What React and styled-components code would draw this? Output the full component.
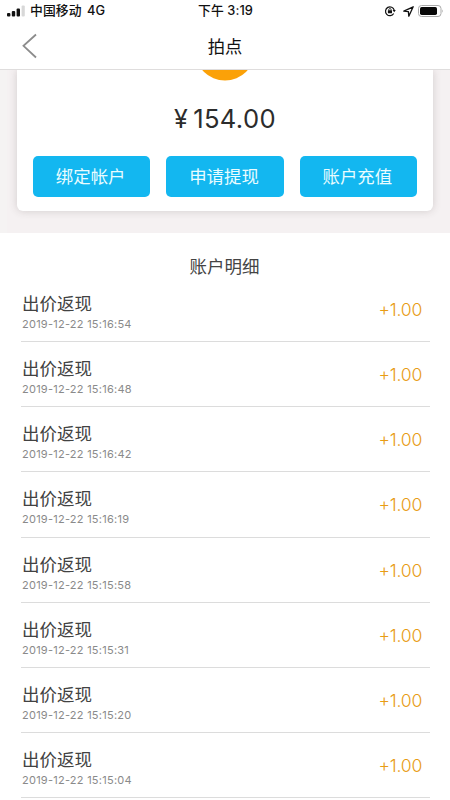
import React from 'react';
import styled, { createGlobalStyle } from 'styled-components';

const GlobalStyle = createGlobalStyle`
  * { box-sizing: border-box; }
  body {
    margin: 0;
    background: #fff;
    font-family: Inter, "Noto Sans CJK SC", sans-serif;
    overflow: hidden;
  }
`;

const Screen = styled.div`
  width: 450px;
  height: 800px;
  overflow: hidden;
  background: #fff;
  display: flex;
  flex-direction: column;
`;

const StatusBar = styled.div`
  flex: none;
  height: 22px;
  display: grid;
  grid-template-columns: 1fr auto 1fr;
  align-items: center;
  padding: 0 6px 0 7px;
  color: #111;
  font-size: 12.8px;
  font-weight: 500;
  line-height: 22px;
  letter-spacing: 0.08px;
  white-space: nowrap;
`;

const Carrier = styled.div`
  display: flex;
  align-items: center;
  gap: 5px;
`;

const Network = styled.span`
  margin-left: 2px;
`;

const StatusIcons = styled.div`
  display: flex;
  justify-content: flex-end;
  align-items: center;
`;

const NavBar = styled.header`
  flex: none;
  height: 48px;
  display: grid;
  grid-template-columns: 40px 1fr 40px;
  align-items: center;
  border-bottom: 1px solid #dfdddd;
`;

const BackButton = styled.button`
  border: 0;
  padding: 0 0 0 21px;
  background: none;
  display: flex;
`;

const NavTitle = styled.h1`
  margin: 0;
  padding-top: 2px;
  font-size: 17.3px;
  font-weight: 400;
  line-height: 24px;
  text-align: center;
  color: #111;
`;

const Wallet = styled.section`
  flex: none;
  height: 163px;
  padding: 0 17px 22px;
  overflow: hidden;
  background: linear-gradient(90deg, #f5f3f3 0 7px, #f5f1f2 7px);
`;

const Card = styled.div`
  height: 141px;
  padding: 0 16px;
  background: #fff;
  border-radius: 0 0 6px 6px;
  box-shadow: 0 0 9px rgba(70, 55, 55, 0.2);
  display: flex;
  flex-direction: column;
  align-items: center;
`;

const Coin = styled.svg`
  display: block;
  flex: none;
`;

const Balance = styled.div`
  margin-top: 21px;
  height: 34px;
  display: flex;
  align-items: center;
  gap: 5px;
  font-size: 25.6px;
  line-height: 34px;
  font-weight: 400;
  letter-spacing: 0.35px;
  color: #2c2c2c;
`;

const Currency = styled.span`
  font-size: 25px;
`;

const Actions = styled.div`
  width: 100%;
  margin-top: 20px;
  display: grid;
  grid-template-columns: repeat(3, 117.3px);
  justify-content: space-between;
`;

const ActionButton = styled.button`
  height: 41px;
  border: 0;
  border-radius: 5px;
  padding: 0 2px 0 0;
  background: #13b7f0;
  color: #e9fcff;
  font-family: inherit;
  font-size: 17.4px;
  line-height: 41px;
`;

const Details = styled.section`
  flex: 1;
  min-height: 0;
  padding: 20px 20px 0 21px;
`;

const DetailsTitle = styled.h2`
  margin: 0;
  padding-right: 2px;
  height: 24px;
  font-size: 17.5px;
  line-height: 28px;
  font-weight: 400;
  text-align: center;
  color: #444;
`;

const List = styled.ul`
  margin: 0;
  padding: 0;
  list-style: none;
`;

const Row = styled.li`
  height: 65.15px;
  padding: 12px 8px 0 1px;
  border-bottom: 1px solid #dcdcdc;
  display: flex;
  justify-content: space-between;
`;

const RowTitle = styled.div`
  height: 28px;
  font-size: 17.5px;
  line-height: 29px;
  color: #424242;
`;

const RowTime = styled.time`
  display: block;
  font-size: 11px;
  line-height: 15px;
  letter-spacing: 0.25px;
  color: #8a8a8a;
`;

const RowAmount = styled.div`
  font-size: 17.6px;
  line-height: 42px;
  font-weight: 300;
  letter-spacing: -0.25px;
  color: #e89c14;
`;

const ACTIONS = ['绑定帐户', '申请提现', '账户充值'];

const TIMES = [
  '15:16:54', '15:16:48', '15:16:42', '15:16:19',
  '15:15:58', '15:15:31', '15:15:20', '15:15:04',
];

const SignalIcon = () => (
  <svg width="18" height="12" viewBox="0 0 18 12">
    <rect x="0" y="8" width="3.4" height="3.5" rx="1" fill="#111" />
    <rect x="4.8" y="6" width="3.4" height="5.5" rx="1" fill="#111" />
    <rect x="9.6" y="3.5" width="3.4" height="8" rx="1" fill="#111" />
    <rect x="14.6" y="0.5" width="3.2" height="11" rx="1" fill="#d8d8d8" />
  </svg>
);

const RotationLockIcon = () => (
  <svg width="12" height="12" viewBox="0 0 12 12" fill="none" stroke="#111">
    <path d="M9.7 8.5A4.4 4.4 0 1 1 10.2 5.2" strokeWidth="1.2" />
    <path d="M8.6 5.1h3.2l-1.6 2.1z" fill="#111" stroke="none" />
    <rect x="3.9" y="5.3" width="4.1" height="3" rx="0.5" fill="#111" stroke="none" />
    <path d="M4.7 5.5v-.7a1.25 1.25 0 0 1 2.5 0v.7" strokeWidth="0.8" />
  </svg>
);

const LocationIcon = styled.svg`
  margin: 0 4px 0 7px;
`;

const App = () => (
  <>
    <GlobalStyle />
    <Screen>
      <StatusBar>
        <Carrier>
          <SignalIcon />
          <span>中国移动 <Network>4G</Network></span>
        </Carrier>
        <span>下午 3:19</span>
        <StatusIcons>
          <RotationLockIcon />
          <LocationIcon width="11" height="11" viewBox="0 0 11 11">
            <path d="M0.8 5.2 10.2 0.8 5.8 10.2 5.4 5.6z" fill="none" stroke="#111" strokeWidth="1.3" strokeLinejoin="round" />
          </LocationIcon>
          <svg width="26" height="12" viewBox="0 0 26 12">
            <rect x="0.5" y="0.5" width="22.5" height="11" rx="3" fill="none" stroke="#aaa" />
            <rect x="2" y="2" width="17" height="8" rx="1.7" fill="#080808" />
            <path d="M24.3 4.2q1.4 1.8 0 3.6z" fill="#999" />
          </svg>
        </StatusIcons>
      </StatusBar>
      <NavBar>
        <BackButton aria-label="返回">
          <svg width="17" height="26" viewBox="0 0 17 26">
            <path d="M15 1.5 2.5 12.8 15 24.5" fill="none" stroke="#8c8c8c" strokeWidth="1.8" />
          </svg>
        </BackButton>
        <NavTitle>拍点</NavTitle>
      </NavBar>
      <Wallet>
        <Card>
          <Coin width="60" height="11" viewBox="0 0 60 11">
            <circle cx="30" cy="-19.5" r="30" fill="#fba108" />
          </Coin>
          <Balance>
            <Currency>¥</Currency>
            <span>154.00</span>
          </Balance>
          <Actions>
            {ACTIONS.map((label) => (
              <ActionButton key={label}>{label}</ActionButton>
            ))}
          </Actions>
        </Card>
      </Wallet>
      <Details>
        <DetailsTitle>账户明细</DetailsTitle>
        <List>
          {TIMES.map((time) => (
            <Row key={time}>
              <div>
                <RowTitle>出价返现</RowTitle>
                <RowTime>2019-12-22 {time}</RowTime>
              </div>
              <RowAmount>+1.00</RowAmount>
            </Row>
          ))}
        </List>
      </Details>
    </Screen>
  </>
);

export default App;
